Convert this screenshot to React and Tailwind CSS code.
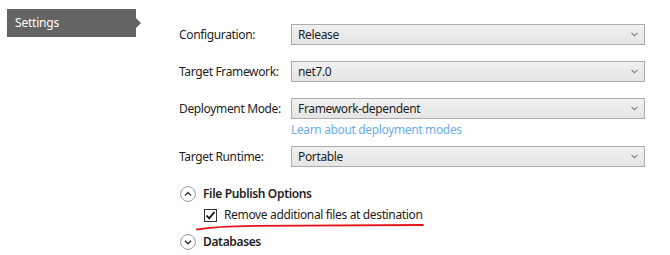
import React from 'react';

const font = { fontFamily: '"Noto Sans", "Open Sans", sans-serif' };

const Chevron = () => (
  <svg width="7" height="5" viewBox="0 0 7 5" className="shrink-0">
    <path d="M0.5 0.8 L3.5 3.8 L6.5 0.8" fill="none" stroke="#7a7a7a" strokeWidth="1.1" />
  </svg>
);

const Dropdown = ({ value }) => (
  <div className="w-[354px] h-[21px] flex items-center justify-between pl-[6px] pr-[6px] border border-[#adadad] bg-gradient-to-b from-[#f0f0f0] to-[#e5e5e5] text-[12px] tracking-[-0.35px] text-[#1e1e1e]">
    <span>{value}</span>
    <Chevron />
  </div>
);

const Row = ({ label, value, className = '' }) => (
  <div className={`flex items-center ${className}`}>
    <div className="w-[112px] text-[12px] tracking-[-0.35px] text-[#1e1e1e]">{label}</div>
    <Dropdown value={value} />
  </div>
);

const Expander = ({ up }) => (
  <svg width="16" height="16" viewBox="0 0 16 16" className="shrink-0">
    <circle cx="8" cy="8" r="7.4" fill="white" stroke="#9a9a9a" strokeWidth="1" />
    {up ? (
      <path d="M5 9.5 L8 6.5 L11 9.5" fill="none" stroke="#333" strokeWidth="1.4" />
    ) : (
      <path d="M5 6.8 L8 9.8 L11 6.8" fill="none" stroke="#333" strokeWidth="1.4" />
    )}
  </svg>
);

export default function App() {
  return (
    <div className="relative w-[670px] h-[255px] bg-white flex overflow-hidden" style={font}>
      {/* Sidebar */}
      <div className="w-[179px] shrink-0 pt-[9px] pl-[7px]">
        <div className="flex items-center">
          <div className="w-[129px] h-[28px] bg-[#646464] text-white text-[12px] tracking-[-0.2px] pl-[8px] flex items-center">
            Settings
          </div>
          <div className="w-0 h-0 border-y-[5px] border-y-transparent border-l-[5px] border-l-[#646464]" />
        </div>
      </div>

      {/* Content */}
      <div className="flex-1 pt-[24px]">
        <Row label="Configuration:" value="Release" />
        <Row label="Target Framework:" value="net7.0" className="mt-4" />
        <Row label="Deployment Mode:" value="Framework-dependent" className="mt-4" />
        <div className="mt-[3px] h-[16px] leading-[16px] pl-[112px] text-[12px] tracking-[-0.35px] text-[#6aaee6]">
          Learn about deployment modes
        </div>
        <Row label="Target Runtime:" value="Portable" className="mt-[8px]" />

        <div className="mt-[19px] h-[16px] flex items-center gap-[7px] pl-[1px]">
          <Expander up />
          <span className="text-[12px] font-semibold tracking-[-0.35px] text-[#1e1e1e]">File Publish Options</span>
        </div>
        <div className="mt-[5px] h-[16px] flex items-center gap-[7px] pl-[25px]">
          <div className="w-[13px] h-[13px] border border-[#333] bg-white flex items-center justify-center">
            <svg width="11" height="11" viewBox="0 0 11 11">
              <path d="M1.5 5.5 L4.2 8.3 L9.5 2" fill="none" stroke="#111" strokeWidth="1.8" />
            </svg>
          </div>
          <span className="text-[12px] tracking-[-0.35px] text-[#1e1e1e]">Remove additional files at destination</span>
        </div>
        <div className="mt-[11px] h-[16px] flex items-center gap-[7px] pl-[1px]">
          <Expander />
          <span className="text-[12px] font-semibold tracking-[-0.35px] text-[#1e1e1e]">Databases</span>
        </div>
      </div>

      {/* Red annotation underline */}
      <svg className="absolute left-[195px] top-[221px]" width="232" height="12" viewBox="0 0 232 12">
        <path d="M2 8.5 Q20 5.2 60 4.8 L228 4" fill="none" stroke="#e4141b" strokeWidth="1.8" strokeLinecap="round" />
      </svg>
    </div>
  );
}
